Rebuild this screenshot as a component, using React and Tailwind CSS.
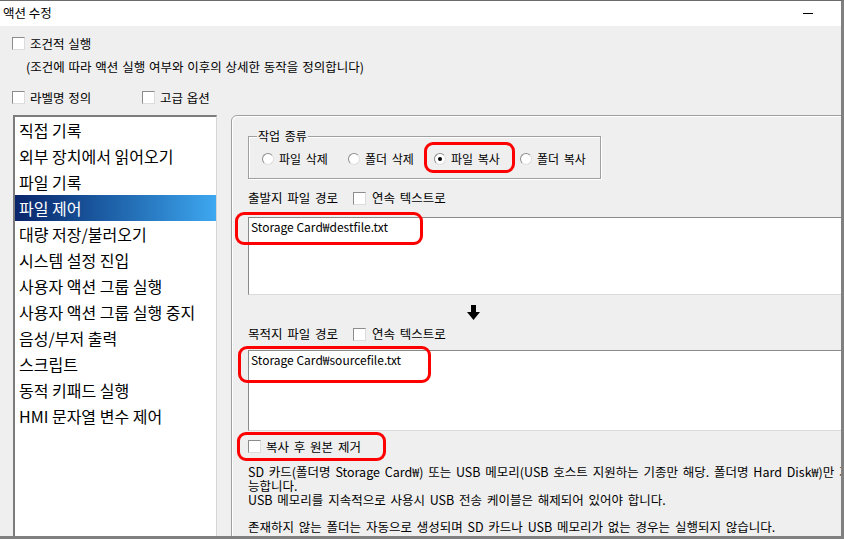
import React from 'react';

const items = [
  '직접 기록',
  '외부 장치에서 읽어오기',
  '파일 기록',
  '파일 제어',
  '대량 저장/불러오기',
  '시스템 설정 진입',
  '사용자 액션 그룹 실행',
  '사용자 액션 그룹 실행 중지',
  '음성/부저 출력',
  '스크립트',
  '동적 키패드 실행',
  'HMI 문자열 변수 제어',
];

const radios = [
  { label: '파일 삭제', checked: false },
  { label: '폴더 삭제', checked: false },
  { label: '파일 복사', checked: true },
  { label: '폴더 복사', checked: false },
];

const CheckBox = () => (
  <span className="inline-block w-[13px] h-[13px] shrink-0 bg-white border border-t-[#8c8c8c] border-l-[#8c8c8c] border-r-[#dcdcdc] border-b-[#dcdcdc]" />
);

const Radio = ({ checked }) => (
  <span className="flex items-center justify-center w-[12px] h-[12px] shrink-0 rounded-full bg-white border border-t-[#8d8d8d] border-l-[#8d8d8d] border-r-[#dedede] border-b-[#dedede]">
    {checked && <span className="w-[4px] h-[4px] rounded-full bg-black" />}
  </span>
);

const Mark = ({ className }) => (
  <div className={`absolute border-[3px] border-[#ff0000] rounded-[9px] pointer-events-none ${className}`} />
);

export default function App() {
  return (
    <div className="relative w-[844px] h-[539px] overflow-hidden flex flex-col bg-[#efefef] text-black font-['Noto_Sans_CJK_KR','Noto_Sans',sans-serif] border-t border-t-[#6b6b6b] border-r-[3px] border-r-[#808080] border-b-[3px] border-b-[#808080]">
      {/* title bar */}
      <div className="h-[25px] shrink-0 bg-white flex items-center justify-between pl-[3px] pr-[28px] text-[12.5px]">
        <span>액션 수정</span>
        <span className="w-[10px] h-[1px] bg-black" />
      </div>

      <div className="flex-1 min-h-0 flex flex-col pl-[12px] pt-[11px] text-[12.5px] leading-[14px] [word-spacing:1px]">
        <div className="flex items-center h-[13px]">
          <CheckBox />
          <span className="ml-[5px]">조건적 실행</span>
        </div>
        <div className="mt-[10px] pl-[14px] h-[14px]">
          (조건에 따라 액션 실행 여부와 이후의 상세한 동작을 정의합니다)
        </div>
        <div className="mt-[17px] flex items-center h-[13px]">
          <div className="w-[130px] flex items-center">
            <CheckBox />
            <span className="ml-[5px]">라벨명 정의</span>
          </div>
          <div className="flex items-center">
            <CheckBox />
            <span className="ml-[5px]">고급 옵션</span>
          </div>
        </div>

        <div className="mt-[11px] ml-[1px] flex text-[12px] [word-spacing:2px]">
          {/* action list */}
          <div className="w-[204px] h-[440px] shrink-0 bg-white border-t-2 border-l-2 border-r border-t-[#7c7c7c] border-l-[#7c7c7c] border-r-[#d6d6d6] text-[16px] leading-[26px] [word-spacing:0px]">
            {items.map((t, i) => (
              <div
                key={t}
                className={`h-[26px] pl-[4px] whitespace-nowrap ${
                  i === 3 ? 'bg-linear-to-r from-[#0a246a] to-[#3ea8f0] text-white' : ''
                }`}
              >
                {t}
              </div>
            ))}
          </div>

          {/* detail panel */}
          <div className="ml-[14px] w-[640px] h-[440px] shrink-0 rounded-[6px] border border-[#a0a0a0] shadow-[inset_1px_1px_0_#fff] pl-[16px] pt-[20px] flex flex-col">
            <div className="relative w-[353px] h-[43px] shrink-0 border border-[#a0a0a0] shadow-[inset_1px_1px_0_#fff,1px_1px_0_#fff]">
              <span className="absolute left-[8px] -top-[8px] px-[1px] bg-[#efefef]">작업 종류</span>
              <div className="flex items-center h-[14px] mt-[15px] pl-[13px]">
                {radios.map((r) => (
                  <div key={r.label} className="w-[86px] shrink-0 flex items-center gap-[5px]">
                    <Radio checked={r.checked} />
                    <span className="whitespace-nowrap">{r.label}</span>
                  </div>
                ))}
              </div>
            </div>

            <div className="mt-[12px] h-[14px] flex items-center text-[12.5px]">
              <span className="w-[105px]">출발지 파일 경로</span>
              <CheckBox />
              <span className="ml-[6px]">연속 텍스트로</span>
            </div>
            <div className="mt-[12px] h-[78px] shrink-0 bg-white border-t border-l border-b border-t-[#8a8a8a] border-l-[#8a8a8a] border-b-[#dadada] pl-[2px] pt-[2px] [word-spacing:0px]">
              Storage Card₩destfile.txt
            </div>

            <div className="mt-[10px] h-[15px] flex ml-[219px]">
              <svg width="13" height="15" viewBox="0 0 13 15">
                <path d="M4 0h5v7h4l-6.5 8L0 7h4z" fill="#000" />
              </svg>
            </div>

            <div className="mt-[7px] h-[14px] flex items-center text-[12.5px]">
              <span className="w-[105px]">목적지 파일 경로</span>
              <CheckBox />
              <span className="ml-[6px]">연속 텍스트로</span>
            </div>
            <div className="mt-[9px] h-[81px] shrink-0 bg-white border-t border-l border-b border-t-[#8a8a8a] border-l-[#8a8a8a] border-b-[#dadada] pl-[2px] pt-[2px] [word-spacing:0px]">
              Storage Card₩sourcefile.txt
            </div>

            <div className="mt-[9px] h-[13px] flex items-center text-[12.5px]">
              <CheckBox />
              <span className="ml-[5px]">복사 후 원본 제거</span>
            </div>

            <div className="mt-[12px] whitespace-nowrap leading-[14px] text-[12.5px]">
              <div>SD 카드(폴더명 Storage Card₩) 또는 USB 메모리(USB 호스트 지원하는 기종만 해당. 폴더명 Hard Disk₩)만 가</div>
              <div>능합니다.</div>
              <div>USB 메모리를 지속적으로 사용시 USB 전송 케이블은 해제되어 있어야 합니다.</div>
              <div className="h-[13px]" />
              <div>존재하지 않는 폴더는 자동으로 생성되며 SD 카드나 USB 메모리가 없는 경우는 실행되지 않습니다.</div>
            </div>
          </div>
        </div>
      </div>

      <Mark className="left-[424px] top-[141px] w-[91px] h-[31px]" />
      <Mark className="left-[235px] top-[211px] w-[188px] h-[33px]" />
      <Mark className="left-[238px] top-[345px] w-[193px] h-[37px]" />
      <Mark className="left-[237px] top-[431px] w-[149px] h-[29px]" />
    </div>
  );
}
